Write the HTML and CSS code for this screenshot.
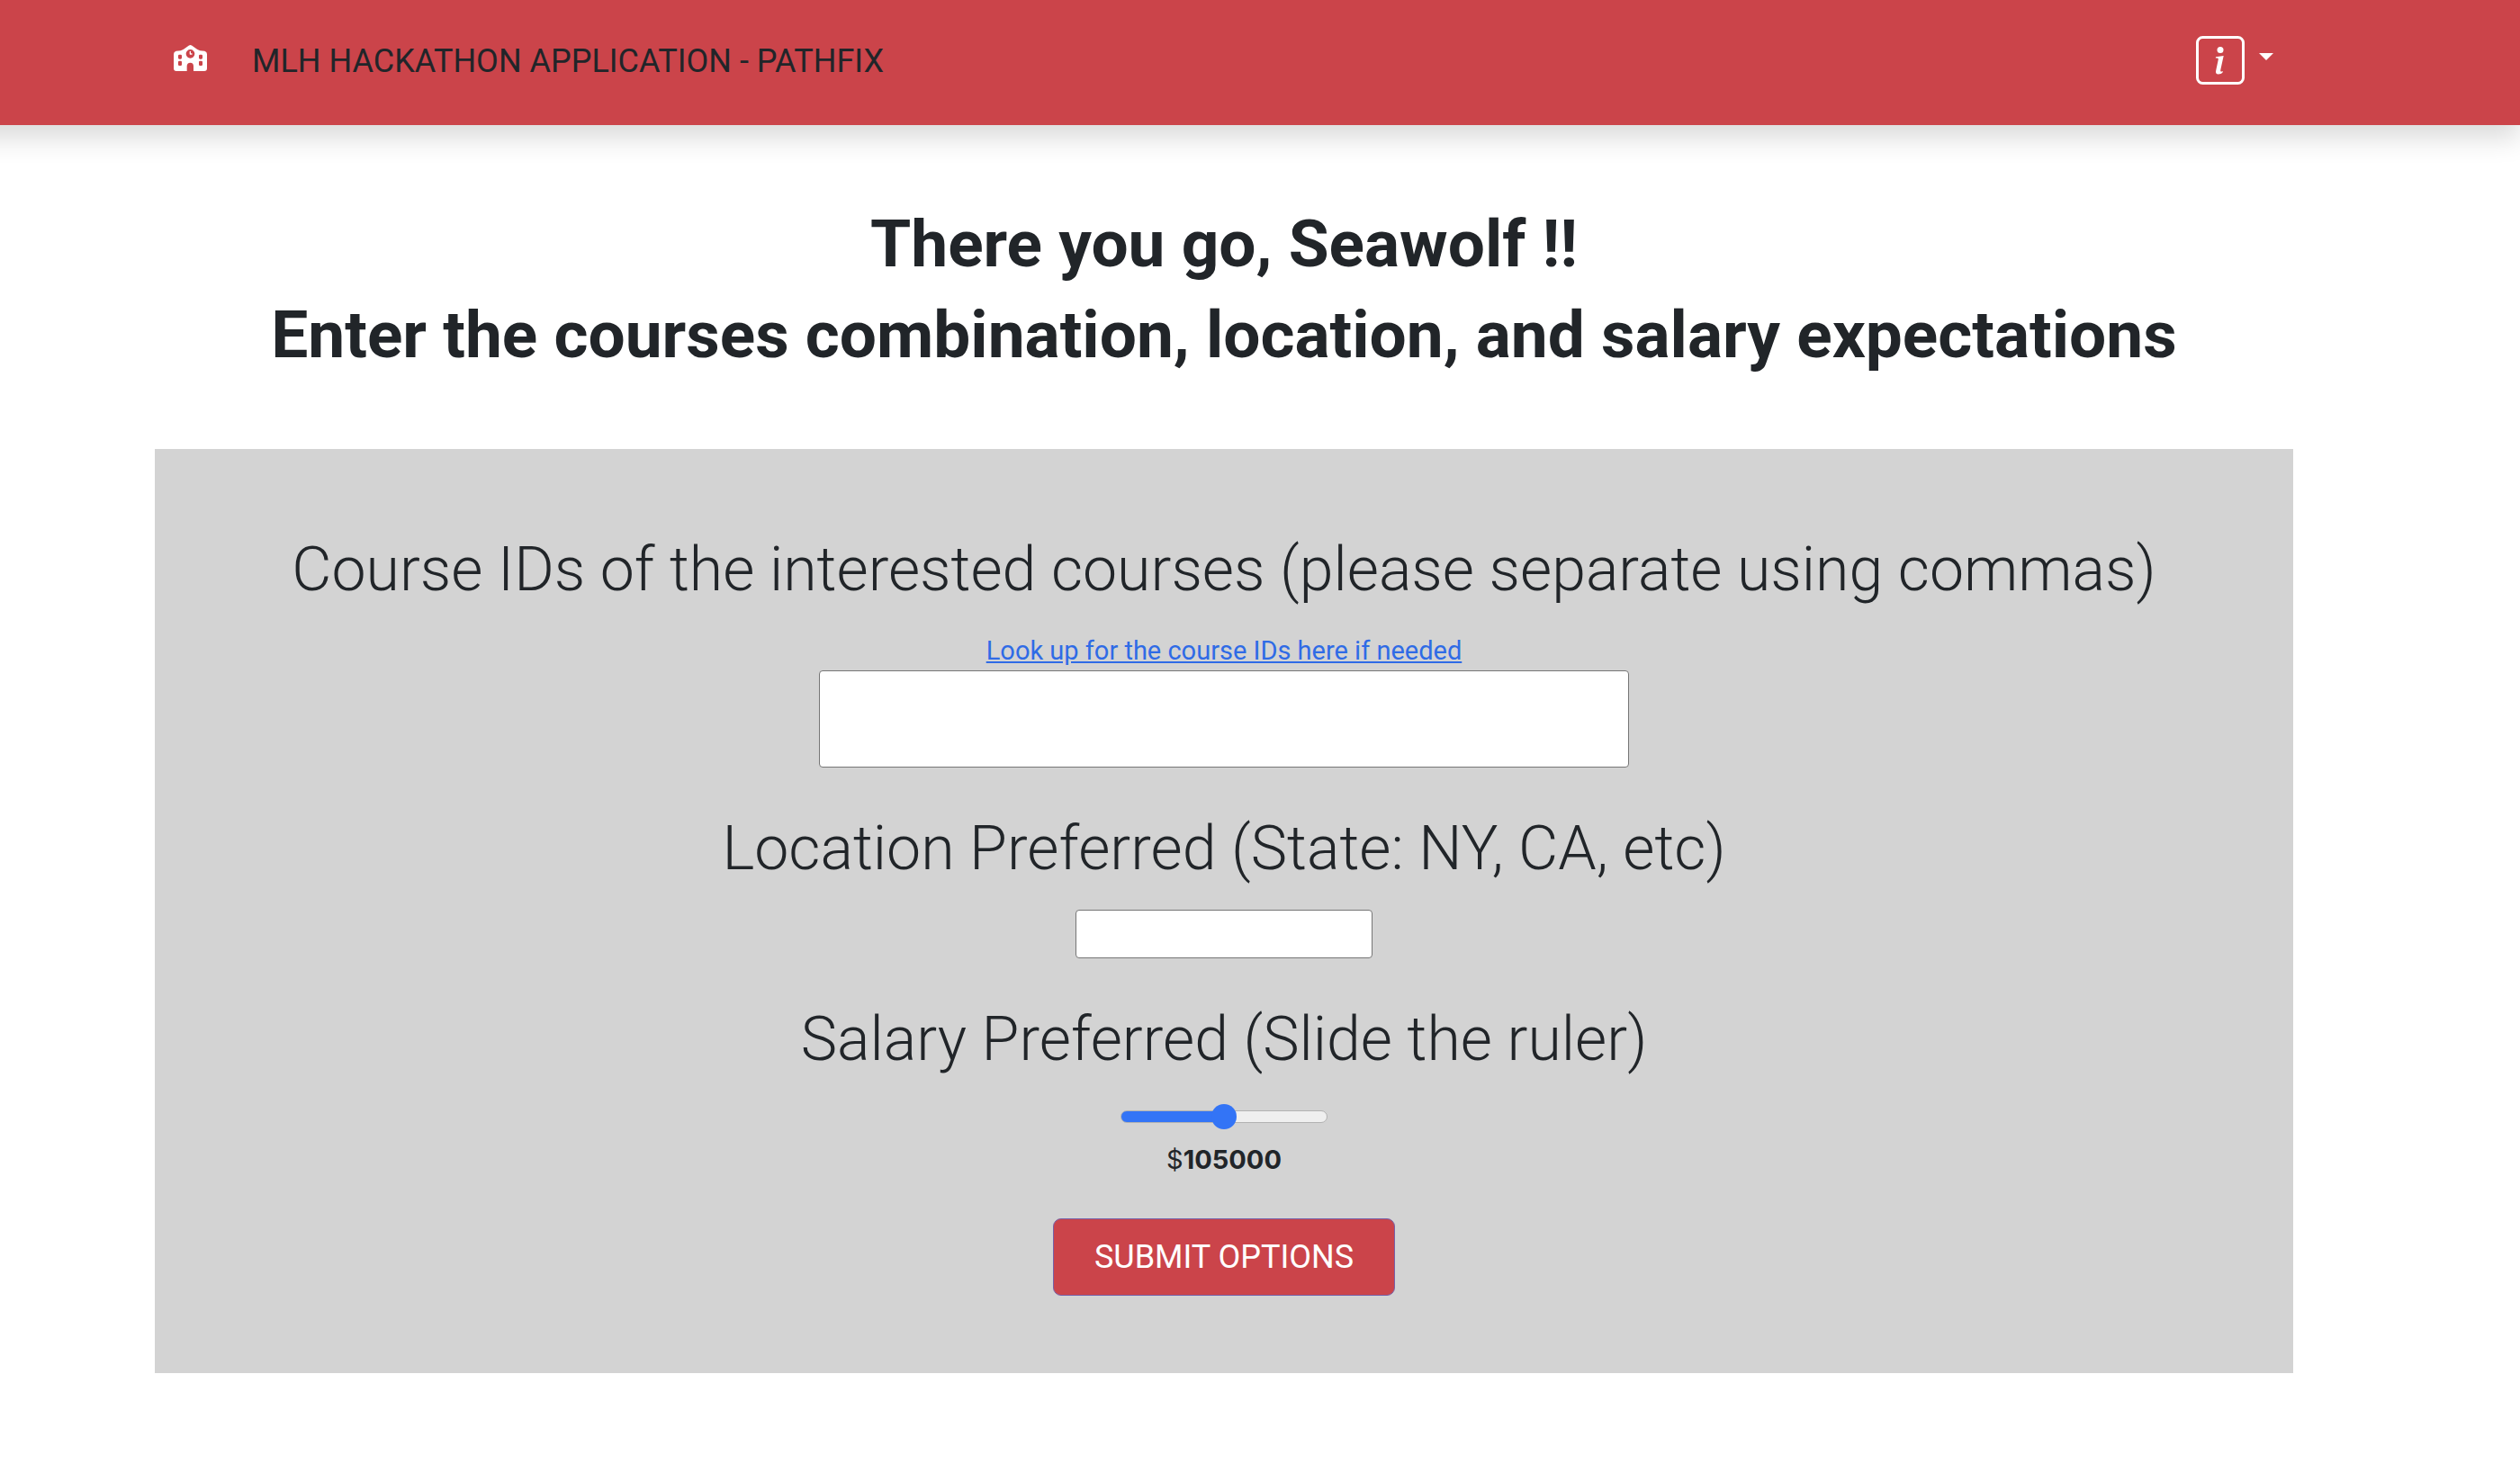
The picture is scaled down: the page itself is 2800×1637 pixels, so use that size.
FILE: index.html
```html
<!DOCTYPE html>
<html lang="en">
<head>
<meta charset="utf-8">
<meta name="viewport" content="width=device-width, initial-scale=1">
<title>Pathfix</title>
<link rel="stylesheet" href="styles.css">
</head>
<body>
<header class="navbar">
  <nav class="container navbar-row" aria-label="Main">
    <a class="home" href="#" aria-label="Home">
      <svg class="home-icon" viewBox="0 0 111 87" aria-hidden="true">
        <path fill="#fff" fill-rule="evenodd" d="M51 1.500Q55.500-1.500 60 1.500L78 14.500Q82 17.500 88 18.500L103 20Q111 22 111 30V78Q111 87 102 87H66V71Q66 59 55.500 59Q44 59 44 71V87H9Q0 87 0 78V30Q0 22 8 20L23 18.500Q29 17.500 33 14.500ZM55.500 15A14.500 14.500 0 1 0 55.500 44A14.500 14.500 0 1 0 55.500 15ZM19 32Q15 32 15 36V43Q15 47 19 47H23Q27 47 27 43V36Q27 32 23 32ZM19 53Q15 53 15 57V65Q15 69 19 69H23Q27 69 27 65V57Q27 53 23 53ZM88 32Q84 32 84 36V43Q84 47 88 47H92Q96 47 96 43V36Q96 32 92 32ZM88 53Q84 53 84 57V65Q84 69 88 69H92Q96 69 96 65V57Q96 53 92 53Z"/>
        <path fill="none" stroke="#fff" stroke-width="4" stroke-linecap="round" stroke-linejoin="round" d="M55 22V30H60"/>
      </svg>
    </a>
    <span class="brand">MLH HACKATHON APPLICATION - PATHFIX</span>
    <button class="info" type="button" aria-label="Information" aria-haspopup="true">
      <svg class="info-icon" viewBox="0 0 54 54" aria-hidden="true">
        <rect x="1.500" y="1.500" width="51" height="51" rx="6" fill="none" stroke="#fff" stroke-width="3"/>
        <circle cx="27" cy="15.500" r="3.500" fill="#fff"/>
        <path fill="#fff" d="M22 23.200 30.700 22 27.300 37.500C27 39 27.300 39.600 28.200 39.600 28.800 39.600 29.400 39.400 30 39L29.700 40.300C28.700 41.700 26.700 42.500 24.900 42.500 22.500 42.500 21.500 41 22.200 38.200L24.700 26.500C25 25.200 24.600 24.800 23.400 24.600L21.800 24.400Z"/>
      </svg>
      <span class="caret"></span>
    </button>
  </nav>
</header>
<main class="page">
  <div class="container">
    <div class="intro">
      <h1>There you go, Seawolf !!</h1>
      <h1>Enter the courses combination, location, and salary expectations</h1>
    </div>
    <form class="panel">
      <label class="title" for="courses">Course IDs of the interested courses (please separate using commas)</label>
      <a class="lookup" href="#">Look up for the course IDs here if needed</a>
      <input class="field field-wide" id="courses" type="text">
      <label class="title" for="location">Location Preferred (State: NY, CA, etc)</label>
      <input class="field" id="location" type="text">
      <label class="title" for="salary">Salary Preferred (Slide the ruler)</label>
      <input class="range" id="salary" type="range" min="10000" max="200000" value="105000">
      <output class="amount" for="salary">$<b>105000</b></output>
      <button class="submit" type="submit">SUBMIT OPTIONS</button>
    </form>
  </div>
</main>
</body>
</html>
```
FILE: styles.css
```css
* { box-sizing: border-box; }

body {
  margin: 0;
  background: #fff;
  color: #212529;
  font-family: Roboto, "Liberation Sans", sans-serif;
  font-size: 29px;
  line-height: 44px;
}

.container {
  max-width: 2376px;
  margin: 0 auto;
}

.navbar {
  margin-left: -80px;
  padding: 40px 80px 43px;
  background: #cb444a;
  box-shadow: 0 14px 28px rgba(0, 0, 0, .15);
}

.navbar-row {
  display: flex;
  align-items: flex-start;
  padding: 0 22px 0 21px;
}

.home {
  display: flex;
  padding-top: 10px;
}

.home-icon { width: 37px; height: 29px; }

.brand {
  margin-left: 50px;
  font-size: 36px;
  line-height: 56px;
}

.info {
  display: flex;
  align-items: center;
  gap: 16px;
  margin-left: auto;
  padding: 0;
  border: 0;
  background: none;
}

.info-icon { width: 54px; height: 54px; }

.caret {
  margin-bottom: 8px;
  border: 8px solid transparent;
  border-top-color: #fff;
  border-bottom: 0;
}

.page { padding-right: 80px; }

.intro {
  padding: 89px 0 84px;
  text-align: center;
}

h1 {
  margin: 0 0 15px;
  font-size: 73px;
  font-weight: 700;
  line-height: 86px;
}

h1:last-child { margin-bottom: 0; }

.panel {
  display: flex;
  flex-direction: column;
  align-items: center;
  padding: 88px 0 86px;
  background: #d3d3d3;
}

.title {
  margin-bottom: 22px;
  font-size: 68px;
  font-weight: 350;
  line-height: 92px;
}

.lookup { color: #2f6be6; }

.field {
  width: 330px;
  height: 54px;
  margin-bottom: 44px;
  border: 1px solid #767676;
  border-radius: 4px;
  background: #fff;
}

.field-wide {
  width: 900px;
  height: 108px;
}

.range {
  width: 230px;
  height: 28px;
  margin: 4px 0 12px;
  appearance: none;
  background: none;
}

.range::-webkit-slider-runnable-track {
  height: 14px;
  border: 1px solid #b2b2b2;
  border-radius: 7px;
  background: linear-gradient(to right, #3374f6 50%, #efefef 50%) border-box;
}

.range::-webkit-slider-thumb {
  width: 28px;
  height: 28px;
  margin-top: -8px;
  appearance: none;
  border-radius: 50%;
  background: #3374f6;
}

.amount {
  margin-bottom: 43px;
  font-family: Inter, "Liberation Sans", sans-serif;
}

.submit {
  height: 86px;
  padding: 0 45px;
  border: 1px solid #7560a8;
  border-radius: 9px;
  background: #cb444a;
  color: #fff;
  font-family: inherit;
  font-size: 36px;
}
```
